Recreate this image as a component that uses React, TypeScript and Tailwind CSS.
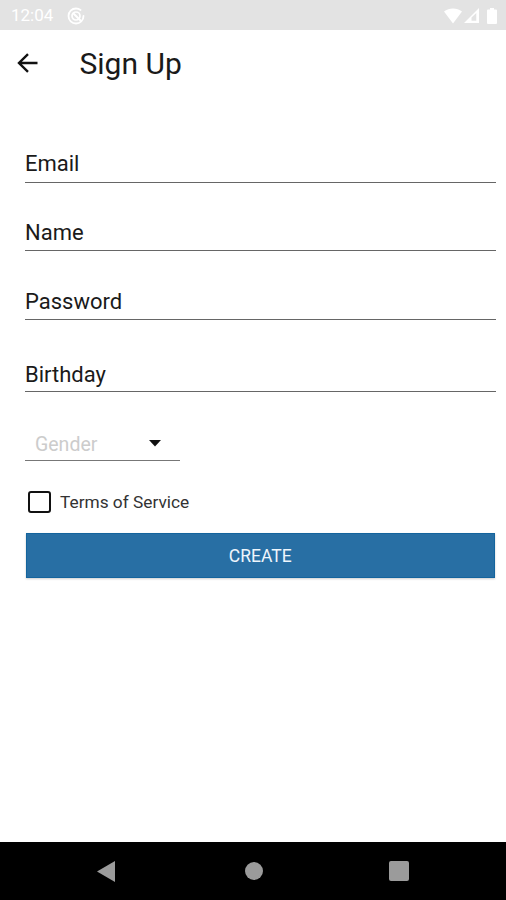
import { useState } from "react";
import clsx from "clsx";

const fields = [
  { id: "email", label: "Email", className: "h-[35px]" },
  { id: "name", label: "Name", className: "mt-[33px] h-[34px]" },
  { id: "password", label: "Password", className: "mt-[34px] h-[34px]" },
  { id: "birthday", label: "Birthday", className: "mt-[38px] h-[33px]" },
];

const StatusBar = () => {
  return (
    <div className="flex h-[30px] shrink-0 items-center bg-[#e3e3e3] pl-[11px] pr-[9px] pt-px text-white">
      <span className="w-14 text-[17px] leading-none">12:04</span>
      <svg
        className="size-[18px]"
        viewBox="0 0 18 18"
        fill="none"
        stroke="currentColor"
        strokeLinecap="round"
      >
        <circle cx="9" cy="9" r="7.5" strokeWidth="1.8" strokeDasharray="40 7" />
        <circle cx="9" cy="9" r="4" strokeWidth="1.7" />
        <path d="M7 7l7 7" strokeWidth="2" />
      </svg>
      <div className="ml-auto flex items-center">
        <svg className="h-4 w-[18px]" viewBox="0 0 18 16" fill="currentColor">
          <path d="M0 3.5C5 -.5 13 -.5 18 3.5L9 15.5z" />
        </svg>
        <svg className="ml-0.5 size-[15px]" viewBox="0 0 15 15" fill="currentColor">
          <path fillRule="evenodd" d="M15 0v15H0zM7.5 9.5v3.3h4.8V5z" />
        </svg>
        <svg className="ml-2 h-4 w-2.5" viewBox="0 0 10 16" fill="currentColor">
          <path d="M3 0h4v1.5h2q1 0 1 1V15q0 1-1 1H1q-1 0-1-1V2.5q0-1 1-1h2z" />
        </svg>
      </div>
    </div>
  );
};

const Header = () => {
  return (
    <header className="flex h-[68px] shrink-0 items-center pl-[17px]">
      <button type="button" aria-label="Back" className="-mt-0.5">
        <svg
          className="h-5 w-[21px]"
          viewBox="0 0 21 20"
          fill="none"
          stroke="#111"
          strokeWidth="2.4"
        >
          <path d="M20.5 10H2M11 1.2L2 10l9 8.8" />
        </svg>
      </button>
      <h1 className="ml-[41.5px] text-[30px] leading-none text-[#1a1a1a]">
        Sign Up
      </h1>
    </header>
  );
};

const NavBar = () => {
  return (
    <nav className="flex h-[58px] shrink-0 items-center bg-black pl-[97px] text-[#9b9b9b]">
      <svg className="h-[21px] w-[18px]" viewBox="0 0 18 21" fill="currentColor">
        <path d="M18 0v21L0 10.5z" />
      </svg>
      <span className="ml-[130px] size-[18px] rounded-full bg-[#9b9b9b]" />
      <span className="ml-[126px] size-5 rounded-xs bg-[#9b9b9b]" />
    </nav>
  );
};

export default function App() {
  const [accepted, setAccepted] = useState(false);

  return (
    <div className="flex h-[900px] w-[506px] flex-col bg-white font-['Roboto',sans-serif]">
      <StatusBar />
      <Header />
      <main className="flex grow flex-col pl-[25px] pr-2.5 pt-[49px]">
        {fields.map((field) => (
          <div
            key={field.id}
            className={clsx(
              "box-content border-b border-[#666] text-[22px] leading-[33px] text-[#1a1a1a]",
              field.className
            )}
          >
            {field.label}
          </div>
        ))}
        <div className="mt-[34px] flex h-[35px] w-[155px] items-start justify-between border-b border-[#777] pl-2.5 pr-[19px] text-[19.5px] leading-[37px] text-[#ccc]">
          <span>Gender</span>
          <svg className="mt-3.5 h-[7px] w-3" viewBox="0 0 12 7" fill="#111">
            <path d="M0 0h12L6 6.5z" />
          </svg>
        </div>
        <button
          type="button"
          role="checkbox"
          aria-checked={accepted}
          onClick={() => setAccepted(!accepted)}
          className="mt-[29px] flex h-6 items-center pl-[3px] text-[17.3px] text-[#333]"
        >
          <span
            className={clsx(
              "h-[22px] w-[23px] rounded-[3px] border-2 border-[#111]",
              accepted && "bg-[#286fa4]"
            )}
          />
          <span className="ml-[9px] pt-0.5">Terms of Service</span>
        </button>
        <button
          type="button"
          className="ml-px mr-[1.5px] mt-[19px] h-[45px] border border-[#14649d] bg-[#286fa4] pt-0.5 text-[17.5px] text-[#eef6fc] shadow-[0_1px_2px_#0003]"
        >
          CREATE
        </button>
      </main>
      <NavBar />
    </div>
  );
}
